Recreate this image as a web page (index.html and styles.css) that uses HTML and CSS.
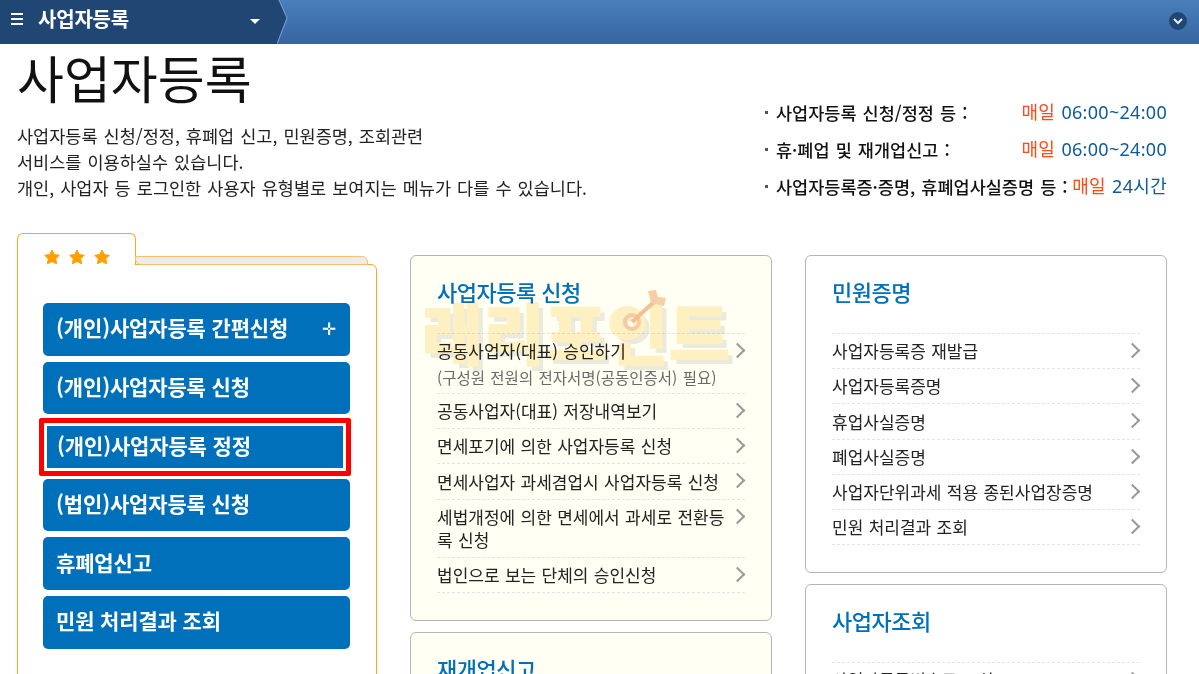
FILE: index.html
```html
<!DOCTYPE html>
<html lang="ko">

<head>
    <meta charset="UTF-8">
    <title>사업자등록</title>
    <link rel="stylesheet" href="styles.css">
</head>

<body>
    <div class="topbar">
        <div class="crumb">
            <span class="burger"><i></i><i></i><i></i></span>
            <span class="crumb-title">사업자등록</span>
            <span class="caret"></span>
        </div>
        <svg class="crumb-tip" width="12" height="44" viewBox="0 0 12 44">
            <path d="M0 0H2L10 18L0 44Z" fill="#204674" />
            <path d="M2 0L10 18L0 44" fill="none" stroke="#7fa6d0" stroke-width="1" />
        </svg>
        <span class="bar-toggle">
            <svg width="10" height="8" viewBox="0 0 10 8">
                <path d="M1 2L5 6L9 2" fill="none" stroke="#e8eef5" stroke-width="2" />
            </svg>
        </span>
    </div>

    <div class="page">
        <div class="intro">
            <div class="intro-left">
                <h1>사업자등록</h1>
                <p>사업자등록 신청/정정, 휴폐업 신고, 민원증명, 조회관련<br>서비스를 이용하실수 있습니다.<br>개인, 사업자 등 로그인한 사용자 유형별로 보여지는 메뉴가 다를 수 있습니다.</p>
            </div>
            <ul class="hours">
                <li><b>사업자등록 신청/정정 등 :</b><span><em>매일</em> 06:00~24:00</span></li>
                <li><b>휴·폐업 및 재개업신고 :</b><span><em>매일</em> 06:00~24:00</span></li>
                <li><b>사업자등록증·증명, 휴폐업사실증명 등 :</b><span><em>매일</em> 24시간</span></li>
            </ul>
        </div>

        <div class="columns">
            <div class="folder">
                <div class="folder-tabs">
                    <div class="tab-on">
                        <svg width="68" height="18" viewBox="0 0 68 18">
                            <path id="s" fill="#ff9f00" stroke="#ff9f00" stroke-linejoin="round" d="M9 2l2.3 4.6 5 .7-3.6 3.5.9 5L9 13.5l-4.6 2.3.9-5L1.700 7.300l5-.7z" />
                            <use href="#s" x="25" />
                            <use href="#s" x="50" />
                        </svg>
                    </div>
                    <div class="tab-off"></div>
                </div>
                <div class="folder-body">
                    <a class="big-btn">(개인)사업자등록 간편신청<span class="plus">✛</span></a>
                    <a class="big-btn">(개인)사업자등록 신청</a>
                    <div class="marked"><a class="big-btn">(개인)사업자등록 정정</a></div>
                    <a class="big-btn">(법인)사업자등록 신청</a>
                    <a class="big-btn">휴폐업신고</a>
                    <a class="big-btn">민원 처리결과 조회</a>
                </div>
            </div>

            <div class="col">
                <section class="card card-yellow card-apply">
                    <h2>사업자등록 신청</h2>
                    <ul class="links">
                        <li>공동사업자(대표) 승인하기<small>(구성원 전원의 전자서명(공동인증서) 필요)</small></li>
                        <li>공동사업자(대표) 저장내역보기</li>
                        <li>면세포기에 의한 사업자등록 신청</li>
                        <li>면세사업자 과세겸업시 사업자등록 신청</li>
                        <li>세법개정에 의한 면세에서 과세로 전환등록 신청</li>
                        <li>법인으로 보는 단체의 승인신청</li>
                    </ul>
                </section>
                <section class="card card-yellow">
                    <h2>재개업신고</h2>
                </section>
            </div>

            <div class="col">
                <section class="card card-cert">
                    <h2>민원증명</h2>
                    <ul class="links">
                        <li>사업자등록증 재발급</li>
                        <li>사업자등록증명</li>
                        <li>휴업사실증명</li>
                        <li>폐업사실증명</li>
                        <li>사업자단위과세 적용 종된사업장증명</li>
                        <li>민원 처리결과 조회</li>
                    </ul>
                </section>
                <section class="card">
                    <h2>사업자조회</h2>
                    <ul class="links">
                        <li>사업자등록번호로 조회</li>
                    </ul>
                </section>
            </div>
        </div>
    </div>

    <div class="watermark">래리포인트
        <svg class="dart" width="48" height="48" viewBox="0 0 48 48">
            <circle cx="13" cy="33" r="7" fill="none" stroke="#f5cba7" stroke-width="4" />
            <path d="M13 33L36 12" fill="none" stroke="#f3bf9a" stroke-width="4" />
            <path d="M29 2L32 14L45 17L47 9L39 8L37 1Z" fill="#f7cfae" />
        </svg>
    </div>
</body>

</html>
```

FILE: styles.css
```css
html,
body {
    height: 100%;
    overflow: hidden;
}

body {
    margin: 0;
    font-family: "Noto Sans CJK KR", "Noto Sans", sans-serif;
    color: #222;
    background-color: #fff;
}

ul {
    list-style: none;
    margin: 0;
    padding: 0;
}

/* top bar */
.topbar {
    height: 44px;
    display: flex;
    align-items: center;
    background: linear-gradient(#4a7fbc, #3565a1);
}

.crumb {
    width: 277px;
    height: 44px;
    display: flex;
    align-items: center;
    padding: 0 0 7px 11px;
    box-sizing: border-box;
    background-color: #204674;
}

.burger {
    width: 12px;
    display: flex;
    flex-direction: column;
    gap: 3px;
}

.burger i {
    height: 2px;
    background-color: #fff;
}

.crumb-title {
    margin-left: 15px;
    font-size: 20px;
    font-weight: 700;
    letter-spacing: -0.2px;
    color: #fff;
}

.caret {
    margin-left: 121px;
    margin-top: 5px;
    border-left: 5px solid transparent;
    border-right: 5px solid transparent;
    border-top: 5px solid #fff;
}

.crumb-tip {
    flex: none;
}

.bar-toggle {
    margin: 0 12px 3px auto;
    width: 18px;
    height: 18px;
    border-radius: 50%;
    background-color: #204674;
    display: flex;
    align-items: center;
    justify-content: center;
}

/* intro */
.page {
    padding: 0 32px 0 17px;
}

.intro {
    height: 189px;
    display: flex;
    justify-content: space-between;
}

h1 {
    margin: 0;
    font-size: 51px;
    font-weight: 400;
    line-height: 66px;
    color: #111;
}

.intro-left p {
    margin: 13px 0 0;
    font-size: 17.5px;
    line-height: 26px;
    word-spacing: 1.2px;
    color: #222;
}

.hours {
    width: 403px;
    padding-top: 50px;
    font-size: 17.5px;
    line-height: 37px;
    word-spacing: 1.2px;
}

.hours li {
    display: flex;
    justify-content: space-between;
    padding-left: 12px;
    position: relative;
}

.hours li::before {
    content: "";
    position: absolute;
    left: 1px;
    top: 17px;
    width: 3px;
    height: 3px;
    background-color: #555;
}

.hours b {
    font-weight: 500;
    color: #111;
}

.hours span {
    font-family: "Noto Sans", "Noto Sans CJK KR", sans-serif;
    font-size: 18px;
    letter-spacing: 0.3px;
    color: #0e5a9c;
}

.hours em {
    font-style: normal;
    color: #ff4a1c;
}

/* columns */
.columns {
    display: grid;
    grid-template-columns: 360px 362px 362px;
    column-gap: 33px;
    align-items: start;
}

.folder-tabs {
    display: flex;
    height: 32px;
    position: relative;
    z-index: 1;
    margin-bottom: -1px;
}

.tab-on {
    width: 119px;
    box-sizing: border-box;
    border: 1px solid #ffa51f;
    border-bottom: none;
    border-radius: 6px 6px 0 0;
    background-color: #fff;
    padding: 14px 0 0 25px;
}

.tab-on svg {
    display: block;
}

.tab-off {
    align-self: flex-end;
    width: 233px;
    height: 9px;
    margin-left: -1px;
    box-sizing: border-box;
    border: 1px solid #ffbf66;
    border-radius: 0 6px 0 6px;
    background-color: #ececec;
}

.folder-body {
    height: 420px;
    box-sizing: border-box;
    border: 1px solid #ffa51f;
    border-radius: 0 6px 0 0;
    padding: 38px 26px 0 25px;
    display: flex;
    flex-direction: column;
    gap: 6px;
}

.big-btn {
    height: 52.6px;
    display: flex;
    align-items: center;
    justify-content: space-between;
    padding: 0 14px 4px 13px;
    box-sizing: border-box;
    border-radius: 5px;
    background-color: #0070bb;
    color: #fff;
    font-size: 21px;
    font-weight: 700;
    letter-spacing: -0.15px;
}

.plus {
    font-size: 17px;
    font-weight: 400;
}

.marked {
    margin: -2px -1px -3.4px -4px;
    border: 5px solid #f00;
    border-radius: 2px;
    padding: 3px;
}

.marked .big-btn {
    height: 42px;
    border-radius: 0;
    padding-left: 10px;
}

.col {
    display: flex;
    flex-direction: column;
    gap: 11px;
    padding-top: 22px;
}

.card {
    box-sizing: border-box;
    border: 1px solid #b5b5b5;
    border-radius: 6px;
    padding: 17px 26px 0;
    background-color: #fff;
    height: 200px;
}

.card-yellow {
    background-color: #fffff3;
}

.card-apply {
    height: 366px;
}

.card-cert {
    height: 318px;
}

h2 {
    margin: 0 0 24px;
    font-size: 22px;
    font-weight: 500;
    line-height: 36px;
    letter-spacing: -0.5px;
    color: #0070bb;
}

.links {
    border-top: 1px dashed #e4e4e4;
}

.links li {
    position: relative;
    padding: 5.2px 20px 6px 0;
    border-bottom: 1px dashed #e4e4e4;
    font-size: 17px;
    line-height: 23px;
    word-spacing: 0.6px;
    color: #222;
}

.links li::after {
    content: "";
    position: absolute;
    right: 2.3px;
    top: 11px;
    width: 9px;
    height: 9px;
    border-top: 2px solid #999;
    border-right: 2px solid #999;
    transform: rotate(45deg);
}

.links small {
    display: block;
    padding-top: 4.8px;
    font-size: 15.5px;
    line-height: 20px;
    word-spacing: 1px;
    color: #6a6a6a;
}

/* watermark over the first card */
.watermark {
    position: absolute;
    left: 422px;
    top: 290px;
    font-size: 66px;
    font-weight: 900;
    line-height: 80px;
    letter-spacing: 1px;
    white-space: nowrap;
    color: #fff0cc;
    -webkit-text-stroke: 1.5px #fff0cc;
    text-shadow: 5px 5px 0 #ebebe6;
    mix-blend-mode: multiply;
    pointer-events: none;
}

.dart {
    position: absolute;
    left: 197px;
    top: -1px;
}
```
